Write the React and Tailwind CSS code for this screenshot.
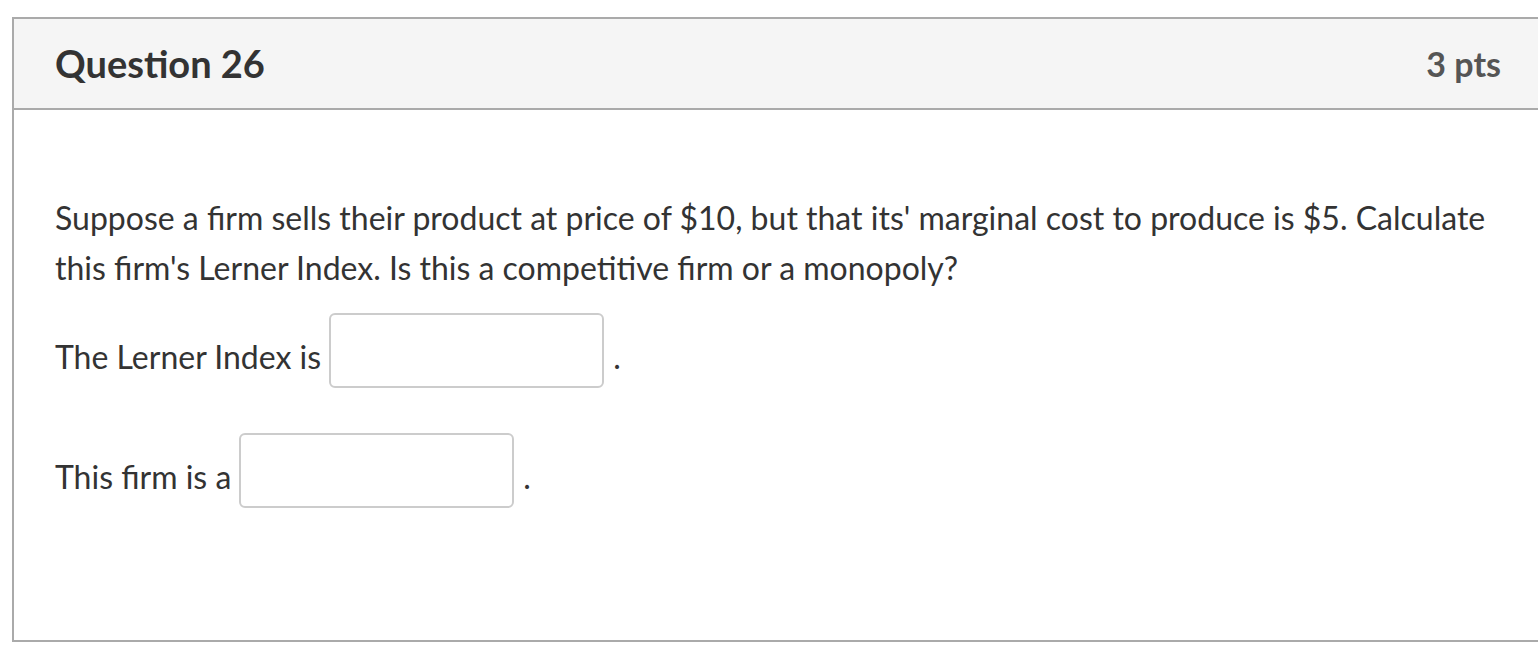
export default function App() {
  return (
    <div className="w-[1538px] h-[660px] overflow-hidden bg-white font-['Lato','Noto_Sans',sans-serif] text-[#333]">
      <div className="mt-[17px] ml-[12px] w-[1530px] border-2 border-[#aaaaaa]">
        <div className="h-[91px] flex items-center justify-between pl-[41px] pr-[39px] bg-[#f5f5f5] border-b-2 border-[#aaaaaa]">
          <h2 className="text-[38px] font-bold text-[#333]">Question 26</h2>
          <span className="text-[34px] font-bold text-[#555]">3 pts</span>
        </div>
        <div className="pl-[41px] pt-[83px] pb-[132px] text-[32px] leading-[50px]">
          <p>
            Suppose a firm sells their product at price of $10, but that its' marginal cost to produce is $5. Calculate
            <br />
            this firm's Lerner Index. Is this a competitive firm or a monopoly?
          </p>
          <div className="mt-[20px] flex items-end">
            <span className="pb-[6px]">The Lerner Index is</span>
            <input
              type="text"
              className="ml-[8px] w-[275px] h-[75px] rounded-[6px] border-2 border-[#cccccc] bg-white outline-none"
            />
            <span className="ml-[9px] pb-[6px]">.</span>
          </div>
          <div className="mt-[45px] flex items-end">
            <span className="pb-[6px]">This firm is a</span>
            <input
              type="text"
              className="ml-[8px] w-[275px] h-[75px] rounded-[6px] border-2 border-[#cccccc] bg-white outline-none"
            />
            <span className="ml-[9px] pb-[6px]">.</span>
          </div>
        </div>
      </div>
    </div>
  );
}
